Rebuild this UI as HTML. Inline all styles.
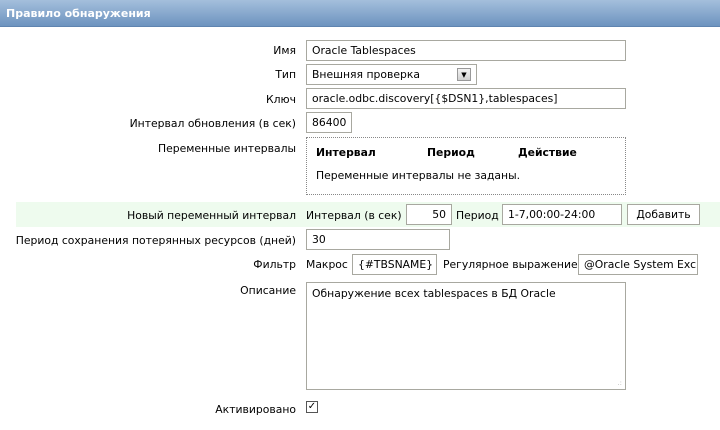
<!DOCTYPE html>
<html><head><meta charset="utf-8"><style>
body{margin:0;width:720px;height:430px;background:#fff;font-family:"DejaVu Sans","Liberation Sans",sans-serif;font-size:10.8px;color:#000;position:relative;overflow:hidden}
.a{position:absolute;white-space:nowrap}
.hdr{left:0;top:0;width:720px;height:26px;background:linear-gradient(#a4bfdc,#6d93bf);border-bottom:1px solid #5f84b0}
.hdr span{position:absolute;left:6px;top:7px;color:#fff;font-weight:bold;font-size:11px}
.l{right:424px;text-align:right}
.in{position:absolute;box-sizing:border-box;border:1px solid #a8a8a0;background:#fff;padding:0 5px;line-height:19px;white-space:nowrap;overflow:hidden}
</style></head><body>
<div class="a hdr"><span>Правило обнаружения</span></div>

<div class="a l" style="top:44px">Имя</div>
<div class="in" style="left:306px;top:40px;width:320px;height:21px">Oracle Tablespaces</div>

<div class="a l" style="top:68px">Тип</div>
<div class="in" style="left:306px;top:64px;width:171px;height:21px">Внешняя проверка
<div style="position:absolute;left:150px;top:3px;width:14px;height:13px;background:linear-gradient(#f4f4f4,#d0d0d0);border:1px solid #999;box-sizing:border-box;font-size:7px;line-height:12px;text-align:center">▼</div></div>

<div class="a l" style="top:93px">Ключ</div>
<div class="in" style="left:306px;top:88px;width:320px;height:21px">oracle.odbc.discovery[{$DSN1},tablespaces]</div>

<div class="a l" style="top:117px">Интервал обновления (в сек)</div>
<div class="in" style="left:306px;top:112px;width:46px;height:21px">86400</div>

<div class="a l" style="top:142px">Переменные интервалы</div>
<div class="a" style="left:306px;top:137px;width:318px;height:56px;border:1px dotted #888"></div>
<div class="a" style="left:316px;top:146px;font-weight:bold">Интервал</div>
<div class="a" style="left:427px;top:146px;font-weight:bold">Период</div>
<div class="a" style="left:518px;top:146px;font-weight:bold">Действие</div>
<div class="a" style="left:316px;top:169px">Переменные интервалы не заданы.</div>

<div class="a" style="left:16px;top:202px;width:704px;height:25px;background:#eefbee"></div>
<div class="a l" style="top:209px">Новый переменный интервал</div>
<div class="a" style="left:306px;top:209px">Интервал (в сек)</div>
<div class="in" style="left:406px;top:204px;width:46px;height:21px;text-align:right">50</div>
<div class="a" style="left:456px;top:209px">Период</div>
<div class="in" style="left:502px;top:204px;width:120px;height:21px">1-7,00:00-24:00</div>
<div class="in" style="left:627px;top:204px;width:73px;height:21px;text-align:center;padding:0">Добавить</div>

<div class="a l" style="top:234px">Период сохранения потерянных ресурсов (дней)</div>
<div class="in" style="left:306px;top:229px;width:144px;height:21px">30</div>

<div class="a l" style="top:258px">Фильтр</div>
<div class="a" style="left:306px;top:258px">Макрос</div>
<div class="in" style="left:352px;top:254px;width:85px;height:21px">{#TBSNAME}</div>
<div class="a" style="left:443px;top:258px">Регулярное выражение</div>
<div class="in" style="left:578px;top:254px;width:120px;height:21px">@Oracle System Exc</div>

<div class="a l" style="top:284px">Описание</div>
<div class="in" style="left:306px;top:282px;width:320px;height:108px;line-height:22px">Обнаружение всех tablespaces в БД Oracle
<span style="position:absolute;right:3px;bottom:2px;color:#bbb;font-size:7px;line-height:7px">.:</span></div>

<div class="a l" style="top:403px">Активировано</div>
<div class="a" style="left:306px;top:401px;width:12px;height:12px;box-sizing:border-box;border:1px solid #555;background:#fff;font-size:10px;line-height:10px;text-align:center;font-weight:bold">✓</div>
</body></html>
